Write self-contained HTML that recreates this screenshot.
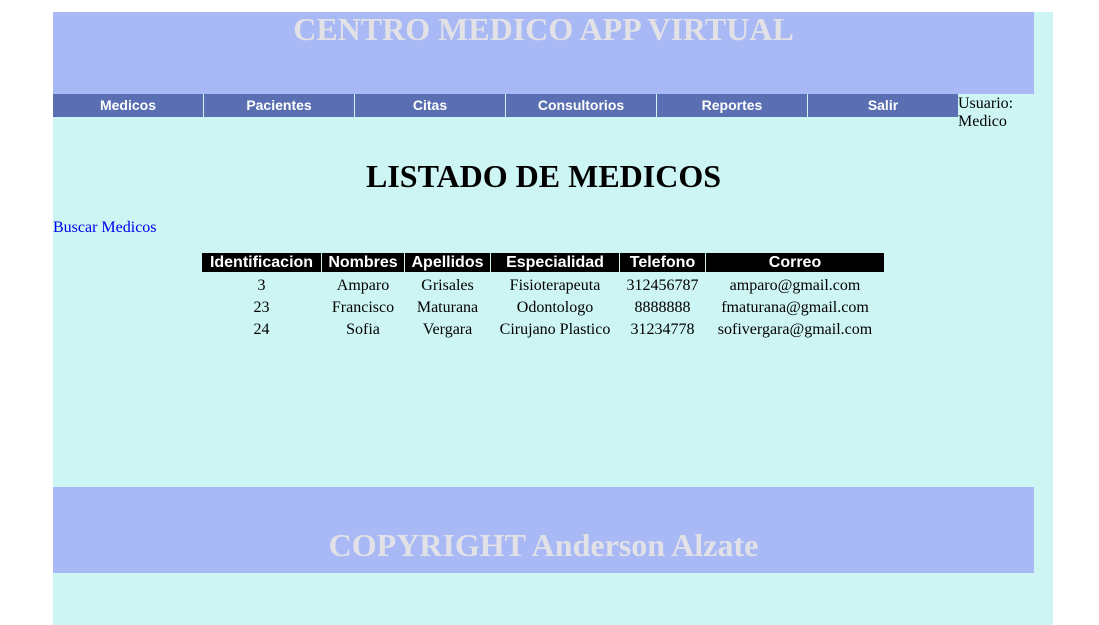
<!DOCTYPE html>
<html><head><style>
body{margin:0;background:#fff;font-family:"Liberation Serif",serif;}
#wrap{position:absolute;left:53px;top:12px;width:1000px;height:613px;background:#cdf5f4;}
#hdr{position:absolute;left:0;top:0;width:981px;height:82px;background:#a9b9f5;}
#hdr h1,#ftr h1{margin:0;color:#e2e2e6;font-size:32px;font-weight:bold;text-align:center;position:absolute;left:0;width:981px;}
#nav{position:absolute;left:0;top:82px;height:23px;}
#nav div{position:absolute;top:0;width:150px;height:23px;background:#5a6fb2;color:#fff;font:bold 14px "Liberation Sans",sans-serif;text-align:center;line-height:23px;}
#usr{position:absolute;left:905px;top:83px;font-size:16px;line-height:18px;}
h2{position:absolute;left:0;width:981px;top:146px;margin:0;text-align:center;font-size:32px;}
a{position:absolute;left:0;top:207px;color:#00e;text-decoration:none;font-size:16px;}
.c{position:absolute;text-align:center;font-size:16px;}
.h{background:#000;color:#fff;font:bold 16px "Liberation Sans",sans-serif;height:19px;line-height:19px;top:241px;}
#ftr{position:absolute;left:0;top:475px;width:981px;height:86px;background:#a9b9f5;}
</style></head><body>
<div id="wrap">
<div id="hdr"><h1 style="top:-1px">CENTRO MEDICO APP VIRTUAL</h1></div>
<div id="nav">
<div style="left:0">Medicos</div><div style="left:151px">Pacientes</div><div style="left:302px">Citas</div><div style="left:453px">Consultorios</div><div style="left:604px">Reportes</div><div style="left:755px">Salir</div>
</div>
<div id="usr">Usuario:<br>Medico</div>
<h2>LISTADO DE MEDICOS</h2>
<a>Buscar Medicos</a>
<div class="c h" style="left:149px;width:119px">Identificacion</div>
<div class="c h" style="left:269px;width:82px">Nombres</div>
<div class="c h" style="left:352px;width:85px">Apellidos</div>
<div class="c h" style="left:438px;width:128px">Especialidad</div>
<div class="c h" style="left:567px;width:85px">Telefono</div>
<div class="c h" style="left:653px;width:178px">Correo</div>
<div class="c" style="left:149px;width:119px;top:263px;line-height:22px">3<br>23<br>24</div>
<div class="c" style="left:269px;width:82px;top:263px;line-height:22px">Amparo<br>Francisco<br>Sofia</div>
<div class="c" style="left:352px;width:85px;top:263px;line-height:22px">Grisales<br>Maturana<br>Vergara</div>
<div class="c" style="left:438px;width:128px;top:263px;line-height:22px">Fisioterapeuta<br>Odontologo<br>Cirujano Plastico</div>
<div class="c" style="left:567px;width:85px;top:263px;line-height:22px">312456787<br>8888888<br>31234778</div>
<div class="c" style="left:653px;width:178px;top:263px;line-height:22px">amparo@gmail.com<br>fmaturana@gmail.com<br>sofivergara@gmail.com</div>
<div id="ftr"><h1 style="top:40px">COPYRIGHT Anderson Alzate</h1></div>
</div>
</body></html>
